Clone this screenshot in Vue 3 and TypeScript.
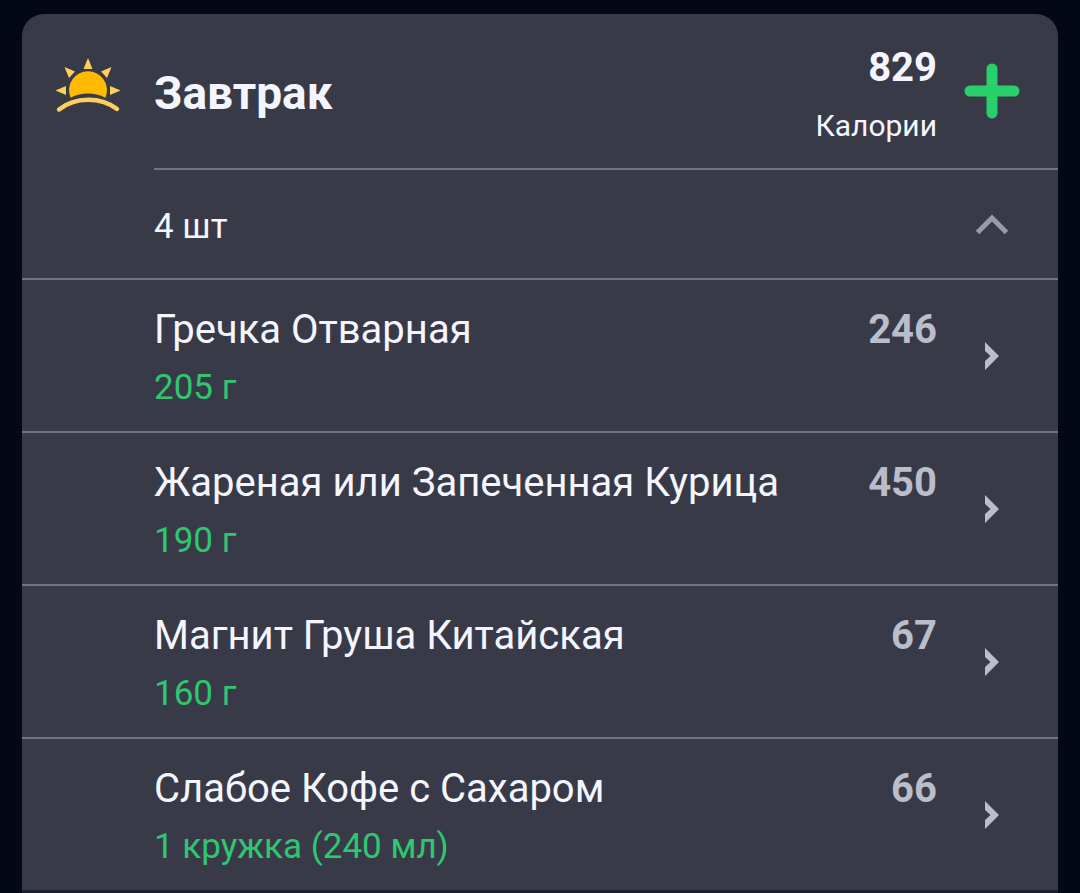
<script setup lang="ts">
import { ref } from 'vue'

interface FoodItem {
  name: string
  amount: string
  calories: number
}

const foods: FoodItem[] = [
  { name: 'Гречка Отварная', amount: '205 г', calories: 246 },
  { name: 'Жареная или Запеченная Курица', amount: '190 г', calories: 450 },
  { name: 'Магнит Груша Китайская', amount: '160 г', calories: 67 },
  { name: 'Слабое Кофе с Сахаром', amount: '1 кружка (240 мл)', calories: 66 },
]

const expanded = ref(true)
</script>

<template>
  <main class="page">
    <section class="card">
      <header class="head">
        <svg class="sun" viewBox="0 0 66 56" aria-hidden="true">
          <path d="M15.500 39.700A19 19 0 1 1 50.500 39.700Q33 31.500 15.500 39.700Z" fill="#ffb900" />
          <g fill="#ffcf5c">
            <path d="M33 0L37.500 11H28.500Z" />
            <path d="M9.500 9L20 13.500L14 20Z" />
            <path d="M56.500 9L52 20L46 13.500Z" />
            <path d="M0.500 32.500L11 28V37Z" />
            <path d="M65.500 32.500L55 28V37Z" />
          </g>
          <path d="M4 51.500C20 38.500 46 38.500 62 51" fill="none" stroke="#ffcf5c" stroke-width="4.400" stroke-linecap="round" />
        </svg>
        <div class="head-main">
          <h1 class="meal">Завтрак</h1>
          <div class="total">
            <strong class="number total-number">829</strong>
            <span class="unit">Калории</span>
          </div>
          <button class="add" type="button" aria-label="Добавить">
            <svg viewBox="0 0 56 56" width="56" height="56" aria-hidden="true">
              <path d="M28 6V50M6 28H50" stroke="#28d06c" stroke-width="11" stroke-linecap="round" />
            </svg>
          </button>
        </div>
      </header>

      <button class="summary" type="button" :aria-expanded="expanded" @click="expanded = !expanded">
        <span class="count">4 шт</span>
        <span class="side">
          <svg :class="{ flipped: !expanded }" viewBox="0 0 34 22" width="34" height="22" aria-hidden="true">
            <path d="M2.500 19.500L17 5L31.500 19.500" fill="none" stroke="#989aa6" stroke-width="5" />
          </svg>
        </span>
      </button>

      <ul v-if="expanded" class="list">
        <li v-for="food in foods" :key="food.name">
          <button class="row" type="button">
            <span class="info">
              <span class="name">{{ food.name }}</span>
              <span class="amount">{{ food.amount }}</span>
            </span>
            <strong class="number">{{ food.calories }}</strong>
            <span class="side">
              <svg viewBox="0 0 16 28" width="16" height="28" aria-hidden="true">
                <path d="M1 0L15 14L1 28V19L6.500 14L1 9Z" fill="#babdca" />
              </svg>
            </span>
          </button>
        </li>
      </ul>
    </section>
  </main>
</template>

<style>
body {
  margin: 0;
  background: #020814;
}
</style>

<style scoped>
.page {
  box-sizing: border-box;
  min-height: 100vh;
  padding: 14px 22px 0;
  font-family: Roboto, "Noto Sans", sans-serif;
  color: #f5f5ff;
}

.card {
  overflow: hidden;
  background: #383b47;
  border-radius: 22px 22px 0 0;
  border-bottom: 3px solid #1c212f;
}

button {
  margin: 0;
  padding: 0;
  border: 0;
  background: none;
  color: inherit;
  font: inherit;
  text-align: left;
  cursor: pointer;
}

svg {
  display: block;
}

.head {
  display: flex;
}

.sun {
  width: 66px;
  height: 56px;
  margin: 44px 33px 0;
}

.head-main {
  flex: 1;
  display: flex;
  align-items: center;
  border-bottom: 2px solid #70737f;
}

.meal {
  flex: 1;
  margin: 0;
  padding-top: 4px;
  font-size: 46px;
  line-height: 58px;
  font-weight: 700;
}

.total {
  display: flex;
  flex-direction: column;
  padding: 25px 0 13px;
  text-align: right;
}

.number {
  font-size: 40px;
  line-height: 58px;
  font-weight: 700;
  color: #babdca;
}

.total-number {
  color: #f5f5ff;
}

.unit {
  font-size: 30px;
  line-height: 58px;
}

.add,
.side {
  display: flex;
  align-items: center;
  justify-content: center;
  width: 110px;
  margin-right: 11px;
}

.summary {
  display: flex;
  align-items: center;
  justify-content: space-between;
  width: 100%;
  padding-left: 132px;
  font-size: 35px;
  line-height: 58px;
}

.count {
  padding: 28px 0 22px;
}

.flipped {
  transform: rotate(180deg);
}

.list {
  margin: 0;
  padding: 0;
  list-style: none;
}

.row {
  display: flex;
  width: 100%;
  padding-left: 132px;
  border-top: 2px solid #70737f;
}

.info {
  flex: 1;
  display: flex;
  flex-direction: column;
  padding: 21px 0 14px;
}

.row .number {
  padding-top: 21px;
}

.name {
  font-size: 40px;
  line-height: 58px;
}

.amount {
  font-size: 35px;
  line-height: 58px;
  color: #30c671;
}

.row .side {
  align-self: center;
}
</style>
